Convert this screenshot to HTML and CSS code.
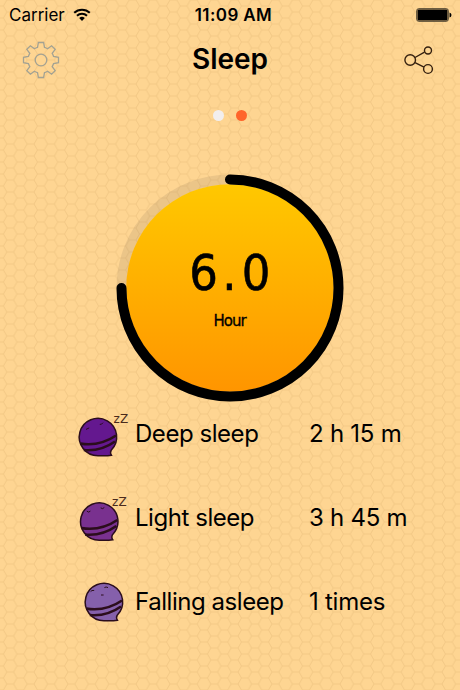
FILE: index.html
```
<!DOCTYPE html>
<html lang="en">
<head>
  <meta charset="UTF-8">
  <meta name="viewport" content="width=device-width, initial-scale=1.0">
  <title>Sleep</title>
  <link rel="stylesheet" href="styles.css">
</head>
<body>
  <!-- honeycomb background -->
  <svg class="honeycomb" width="460" height="690">
    <defs>
      <pattern id="hex" width="20.4" height="12" patternUnits="userSpaceOnUse">
        <path d="M0 6H3.4L6.8 0H13.6L17 6H20.4M3.4 6L6.8 12H13.6L17 6" />
      </pattern>
    </defs>
    <rect width="460" height="690" fill="url(#hex)" />
  </svg>

  <div class="screen">
    <div class="status-bar">
      <div class="carrier">
        <span>Carrier</span>
        <svg width="18" height="14" viewBox="0 0 18 14">
          <path d="M1.2 4.8a11.3 11.3 0 0 1 15.6 0M4 7.8a7.3 7.3 0 0 1 10 0" fill="none" stroke="#000" stroke-width="2" />
          <path d="M6.2 10.1a4 4 0 0 1 5.6 0L9 13z" />
        </svg>
      </div>
      <span class="clock">11:09 AM</span>
      <svg class="battery" width="36" height="14" viewBox="0 0 36 14">
        <rect x=".7" y=".7" width="31.6" height="12.6" rx="2" fill="none" stroke="#4d432f" />
        <rect x="1.5" y="1.5" width="30" height="11" rx="1" />
        <path d="M33.5 4.5q2 .5 2 2.5t-2 2.5z" />
      </svg>
    </div>

    <header class="header">
      <svg class="gear" width="38" height="38" viewBox="-19 -19 38 38">
        <path d="M-2.6-17.5H2.6L3.5-12.6Q5.3-12 6.6-11.2L10.6-14.2L14.2-10.6L11.2-6.6Q12-5.3 12.6-3.5L17.5-2.6V2.6L12.6 3.5Q12 5.3 11.2 6.6L14.2 10.6L10.6 14.2L6.6 11.2Q5.3 12 3.5 12.6L2.6 17.5H-2.6L-3.5 12.6Q-5.3 12-6.6 11.2L-10.6 14.2L-14.2 10.6L-11.2 6.6Q-12 5.3-12.6 3.5L-17.5 2.6V-2.6L-12.6-3.5Q-12-5.3-11.2-6.6L-14.2-10.6L-10.6-14.2L-6.6-11.2Q-5.3-12-3.5-12.6Z" />
        <circle r="5.8" />
      </svg>
      <h1>Sleep</h1>
      <svg class="share" width="30" height="30" viewBox="0 0 30 30">
        <path d="M11 12.5L20.5 7.2M11 17.6L20 22.2" />
        <circle cx="6.2" cy="15" r="5.3" />
        <circle cx="24" cy="5.5" r="3.5" />
        <circle cx="24" cy="24" r="4.4" />
      </svg>
    </header>

    <div class="pager">
      <span class="dot"></span>
      <span class="dot active"></span>
    </div>

    <svg class="ring" width="228" height="228" viewBox="-114 -114 228 228">
      <defs>
        <linearGradient id="sun" x1="0" y1="0" x2="0" y2="1">
          <stop offset="0" stop-color="#ffc800" />
          <stop offset="1" stop-color="#ff9500" />
        </linearGradient>
      </defs>
      <circle class="track" r="108.5" />
      <circle r="103.8" fill="url(#sun)" />
      <path class="progress" d="M0-108.5A108.5 108.5 0 1 1-108.5 0" />
      <text class="value" x="-26.5 -.5 26" y="2">6.0</text>
      <text class="unit" x="-.5" y="38">Hour</text>
    </svg>

    <div class="stats">
      <div class="row">
        <svg class="face" width="56" height="48" viewBox="0 0 56 48">
          <path class="head" fill="#64188f" d="M35.2 40.2Q33.8 43 35.4 45.2Q30 46.2 22 45.7A18.7 18.7 0 1 1 35.2 40.2Z" />
          <path class="wrap" d="M4.4 33.6Q24 36.5 40 25.5M7.8 40Q25 41.5 39 31.5" />
          <path class="eyes" d="M10 19.4l3.2-1.5M23.8 14.4q2 .3 3.2-1.7" />
          <text class="zz" x="37.5 44" y="13">zZ</text>
        </svg>
        <span class="name">Deep sleep</span>
        <span class="amount">2 h 15 m</span>
      </div>
      <div class="row">
        <svg class="face" width="56" height="48" viewBox="0 0 56 48">
          <g transform="translate(1.3 .5)">
            <path class="head" fill="#79318f" d="M35.2 40.2Q33.8 43 35.4 45.2Q30 46.2 22 45.7A18.7 18.7 0 1 1 35.2 40.2Z" />
            <path class="wrap" d="M4.4 33.6Q24 36.5 40 25.5M7.8 40Q25 41.5 39 31.5" />
            <path class="eyes" d="M9.5 16.6q2 2 3.6 0M23.4 13.4q2 1.6 3.6-.4" />
          </g>
          <text class="zz" x="36 42.5" y="11.5">zZ</text>
        </svg>
        <span class="name">Light sleep</span>
        <span class="amount">3 h 45 m</span>
      </div>
      <div class="row">
        <svg class="face" width="56" height="48" viewBox="0 0 56 48">
          <g transform="translate(6 -3)">
            <path class="head" fill="#8560ab" d="M35.2 40.2Q33.8 43 35.4 45.2Q30 46.2 22 45.7A18.7 18.7 0 1 1 35.2 40.2Z" />
            <path class="wrap" d="M4.4 33.6Q24 36.5 40 25.5M7.8 40Q25 41.5 39 31.5" />
            <path class="eyes" d="M8.6 16.6q1-1.6 3.6-1.2M22.4 12.6q1.6-1.2 3.6 0M19 20h2.6" />
          </g>
        </svg>
        <span class="name">Falling asleep</span>
        <span class="amount">1 times</span>
      </div>
    </div>
  </div>
</body>
</html>
```
FILE: styles.css
```
body {
  margin: 0;
  background: #fed592;
  color: #000;
  font-family: Inter, "Liberation Sans", sans-serif;
  overflow: hidden;
}

/* Background */
.honeycomb {
  position: absolute;
  top: 0;
  left: 0;
  z-index: -1;
}
.honeycomb path {
  fill: none;
  stroke: #f3c986;
  stroke-width: 1;
}

.screen {
  width: 460px;
  height: 690px;
  display: flex;
  flex-direction: column;
}

/* Status bar */
.status-bar {
  height: 30px;
  padding: 0 8px 0 9px;
  display: grid;
  grid-template-columns: 1fr auto 1fr;
  align-items: center;
  font-size: 17px;
}
.carrier {
  display: flex;
  align-items: center;
  gap: 8px;
}
.clock {
  padding-left: 6px;
  font-weight: 600;
  letter-spacing: 0.4px;
}
.battery {
  justify-self: end;
}

/* Header */
.header {
  height: 60px;
  padding: 0 22px;
  display: grid;
  grid-template-columns: 1fr auto 1fr;
  align-items: center;
}
.header h1 {
  margin: 0;
  padding-bottom: 2px;
  font-size: 28px;
  font-weight: 600;
}
.gear {
  fill: none;
  stroke: #a3a293;
  stroke-width: 1.3;
}
.share {
  justify-self: end;
  margin-right: 4px;
  fill: none;
  stroke: #35200f;
  stroke-width: 1.4;
}

/* Page dots */
.pager {
  height: 50px;
  display: flex;
  justify-content: center;
  align-items: center;
  gap: 12px;
}
.dot {
  width: 11px;
  height: 11px;
  border-radius: 50%;
  background: #f2eeee;
}
.dot.active {
  background: #ff652b;
}

/* Ring */
.ring {
  margin: 34px auto 0;
}
.track {
  fill: none;
  stroke: rgba(130, 110, 80, 0.15);
  stroke-width: 10;
}
.progress {
  fill: none;
  stroke: #000;
  stroke-width: 10;
  stroke-linecap: round;
}
.value {
  font-family: "DejaVu Sans Condensed", "DejaVu Sans", sans-serif;
  font-stretch: condensed;
  font-size: 50px;
  text-anchor: middle;
  stroke: #000;
  stroke-width: 0.6;
}
.unit {
  font-family: "DejaVu Sans", sans-serif;
  font-size: 15px;
  letter-spacing: -1px;
  text-anchor: middle;
  stroke: #000;
  stroke-width: 0.3;
}

/* Sleep stats */
.stats {
  margin-top: -10px;
}
.row {
  height: 84px;
  padding-left: 76px;
  display: grid;
  grid-template-columns: 59px 174px 1fr;
  align-items: center;
  font-size: 24px;
}
.name {
  padding-bottom: 1px;
  letter-spacing: -0.45px;
}
.amount {
  padding-bottom: 1px;
  letter-spacing: -0.25px;
}
.face {
  overflow: visible;
}
.head {
  stroke: #2b0d1c;
  stroke-width: 1.5;
}
.wrap {
  fill: none;
  stroke: #2b0d1c;
  stroke-width: 2.6;
}
.eyes {
  fill: none;
  stroke: #2b0d1c;
  stroke-width: 1;
}
.zz {
  font-family: "DejaVu Sans", sans-serif;
  font-size: 12px;
  fill: #4a2a1c;
}
```
